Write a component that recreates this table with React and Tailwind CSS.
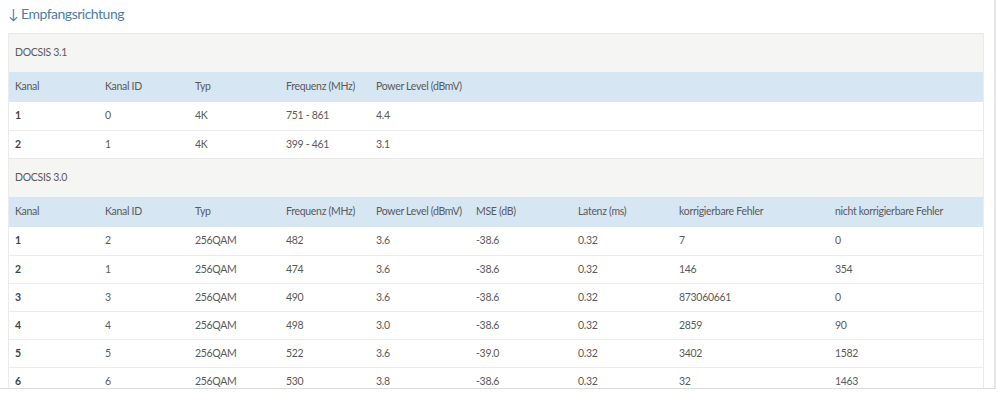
import React from 'react';

const cols = 'grid grid-cols-[90px_90px_91px_90px_100px_102px_101px_156px_1fr]';

const head31 = ['Kanal', 'Kanal ID', 'Typ', 'Frequenz (MHz)', 'Power Level (dBmV)'];
const rows31 = [
  ['1', '0', '4K', '751 - 861', '4.4'],
  ['2', '1', '4K', '399 - 461', '3.1'],
];

const head30 = [
  'Kanal', 'Kanal ID', 'Typ', 'Frequenz (MHz)', 'Power Level (dBmV)',
  'MSE (dB)', 'Latenz (ms)', 'korrigierbare Fehler', 'nicht korrigierbare Fehler',
];
const rows30 = [
  ['1', '2', '256QAM', '482', '3.6', '-38.6', '0.32', '7', '0'],
  ['2', '1', '256QAM', '474', '3.6', '-38.6', '0.32', '146', '354'],
  ['3', '3', '256QAM', '490', '3.6', '-38.6', '0.32', '873060661', '0'],
  ['4', '4', '256QAM', '498', '3.0', '-38.6', '0.32', '2859', '90'],
  ['5', '5', '256QAM', '522', '3.6', '-39.0', '0.32', '3402', '1582'],
  ['6', '6', '256QAM', '530', '3.8', '-38.6', '0.32', '32', '1463'],
];

function SectionRow({ label }) {
  return (
    <div className="h-[39px] flex items-center px-[6px] bg-[#f5f5f3] border-t border-[#e8e8e6]">
      {label}
    </div>
  );
}

function HeadRow({ cells }) {
  return (
    <div className={`${cols} h-[30px] items-center bg-[#d7e6f3]`}>
      {cells.map((c, i) => (
        <div key={i} className="px-[6px] whitespace-nowrap">{c}</div>
      ))}
    </div>
  );
}

function DataRow({ cells }) {
  return (
    <div className={`${cols} h-[28px] items-center border-t border-[#ececec] first:border-t-0`}>
      {cells.map((c, i) => (
        <div key={i} className={`px-[6px] whitespace-nowrap ${i === 0 ? 'font-bold text-[#444]' : ''}`}>
          {c}
        </div>
      ))}
    </div>
  );
}

export default function App() {
  return (
    <div className="w-[998px] h-[393px] bg-white overflow-hidden font-['Lato','Liberation_Sans',sans-serif]">
      <div className="w-[996px] h-[389px] border-r-2 border-[#e6e6e4] border-b border-b-[#dcdcdc] overflow-hidden">
        <h2 className="pl-[8px] pt-[4px] h-[33px] text-[14px] tracking-[-0.5px] text-[#4c7ea9] leading-[20px]">
          ↓ Empfangsrichtung
        </h2>
        <div className="ml-[8px] w-[976px] border-x border-[#ebebeb] text-[10.5px] tracking-[-0.3px] text-[#5a5a5a]">
          <SectionRow label="DOCSIS 3.1" />
          <HeadRow cells={head31} />
          <div>
            {rows31.map((r, i) => <DataRow key={i} cells={r} />)}
          </div>
          <SectionRow label="DOCSIS 3.0" />
          <HeadRow cells={head30} />
          <div>
            {rows30.map((r, i) => <DataRow key={i} cells={r} />)}
          </div>
        </div>
      </div>
    </div>
  );
}
